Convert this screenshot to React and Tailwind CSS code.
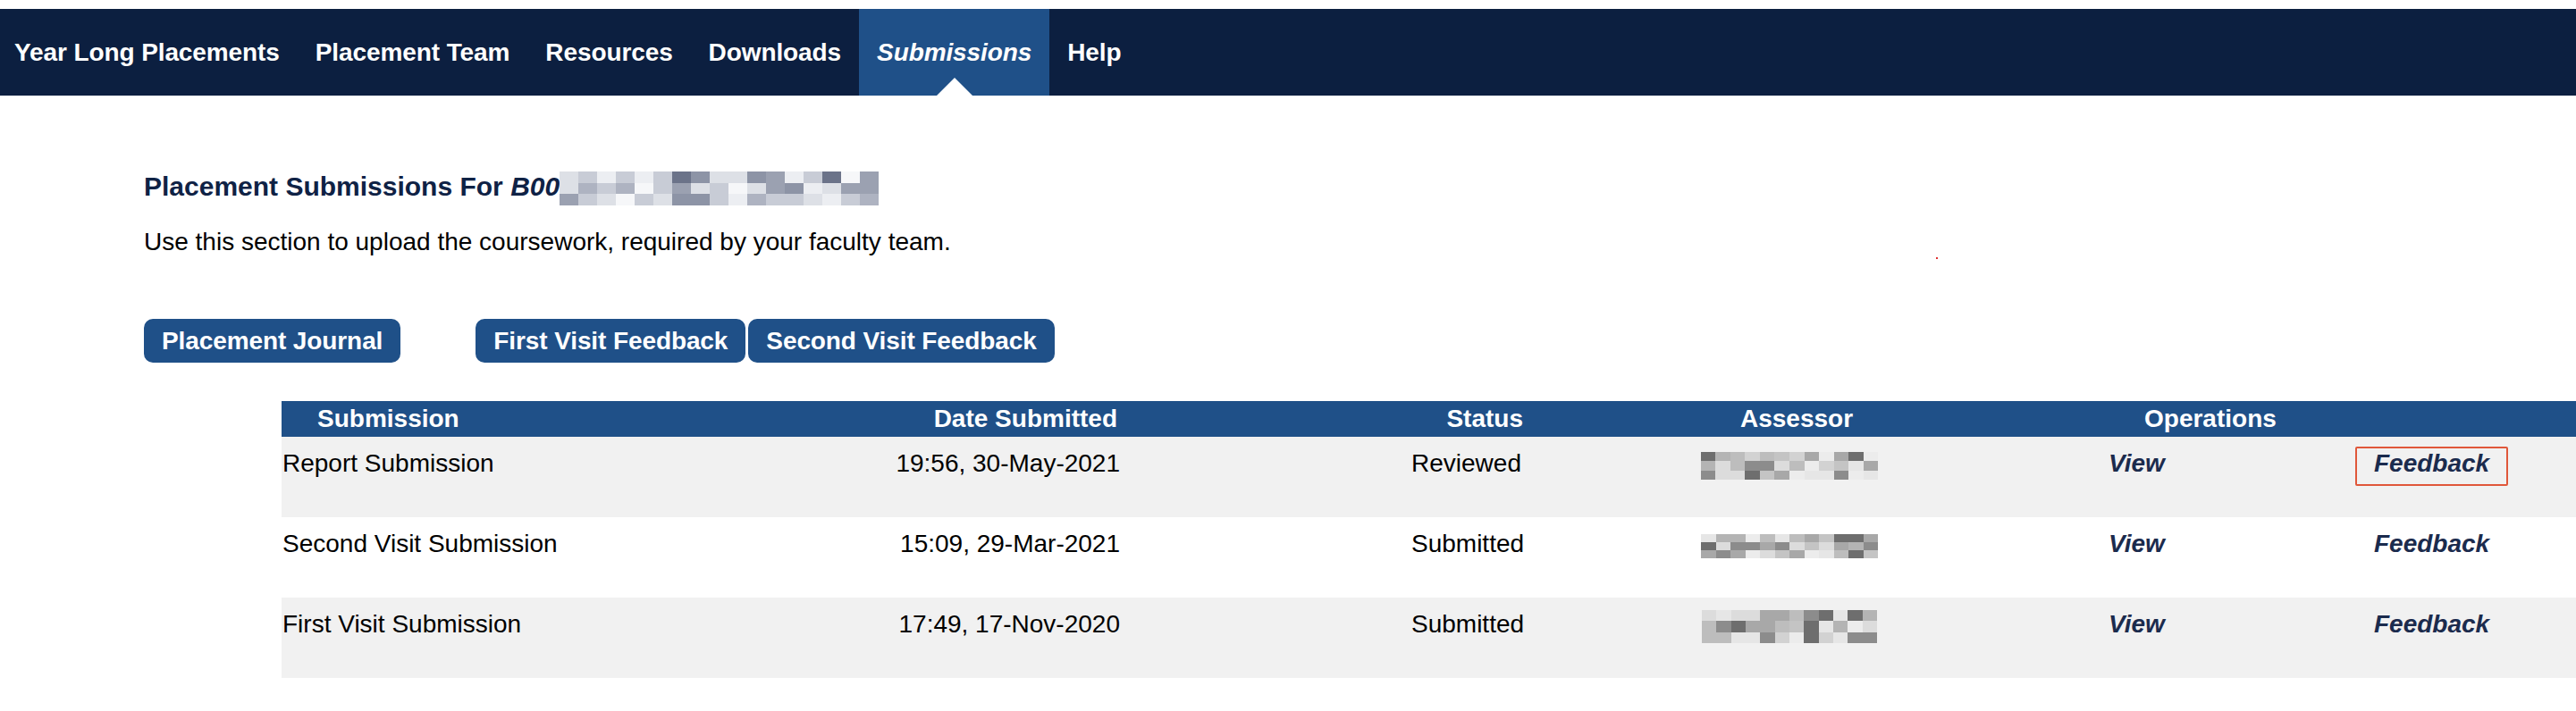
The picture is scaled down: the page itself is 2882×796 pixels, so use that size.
import React from 'react';

const navItems = ['Year Long Placements', 'Placement Team', 'Resources', 'Downloads', 'Submissions', 'Help'];

const headPalette = ['bg-[#6b7389]', 'bg-[#8d94a6]', 'bg-[#aeb3c1]', 'bg-[#c8ccd6]', 'bg-[#dde0e6]', 'bg-[#eceef2]', 'bg-[#f6f7f9]', 'bg-[#9ba1b1]', 'bg-[#c8ccd6]', 'bg-[#dde0e6]'];
const grayPalette = ['bg-[#e6e6e6]', 'bg-[#d2d2d2]', 'bg-[#bdbdbd]', 'bg-[#a8a8a8]', 'bg-[#8c8c8c]', 'bg-[#dcdcdc]', 'bg-[#6e6e6e]', 'bg-[#c4c4c4]', 'bg-[#ececec]', 'bg-[#b4b4b4]'];

const rows = [
  { name: 'Report Submission', date: '19:56, 30-May-2021', status: 'Reviewed', shaded: true, focus: true, blur: 'mt-[17px] w-[199px] h-[31px]', seed: 11 },
  { name: 'Second Visit Submission', date: '15:09, 29-Mar-2021', status: 'Submitted', blur: 'mt-[19px] w-[198px] h-[27px]', seed: 47 },
  { name: 'First Visit Submission', date: '17:49, 17-Nov-2020', status: 'Submitted', shaded: true, blur: 'mt-[14px] w-[196px] h-[37px]', seed: 83 },
];

// fake mosaic for the redacted bits
function Pixelated({ className, cols, lines, palette, seed }) {
  let s = seed;
  const next = () => (s = (s * 9301 + 49297) % 233280) / 233280;
  return (
    <div className={'flex flex-col ' + className}>
      {Array.from({ length: lines }).map((_, r) => (
        <div key={r} className="flex flex-1">
          {Array.from({ length: cols }).map((_, c) => (
            <div key={c} className={'flex-1 ' + palette[Math.floor(next() * palette.length)]} />
          ))}
        </div>
      ))}
    </div>
  );
}

export default function App() {
  return (
    <div className="relative min-h-[796px] whitespace-nowrap bg-white pt-[10px] font-['Liberation_Sans',Arial,Helvetica,sans-serif] text-black">
      <nav className="flex h-[97px] bg-[#0c1f40]">
        <ul className="-ml-[4px] flex h-full">
          {navItems.map(item => {
            const active = item === 'Submissions';
            return (
              <li key={item} className={'relative flex h-full items-center px-[20px] text-[28px] font-bold tracking-[-0.1px] text-white ' + (active ? 'bg-[#1f5088] italic' : '')}>
                {item}
                {active && (
                  <span className="absolute bottom-0 left-1/2 h-0 w-0 -translate-x-1/2 border-x-[20px] border-b-[20px] border-x-transparent border-b-white" />
                )}
              </li>
            );
          })}
        </ul>
      </nav>

      <div className="pl-[161px]">
        <div className="mt-[85px] flex items-start">
          <h2 className="text-[30px] font-bold leading-[34px] text-[#0f2245]">
            Placement Submissions For <span className="italic">B00</span>
          </h2>
          <Pixelated className="h-[38px] w-[357px]" cols={17} lines={3} palette={headPalette} seed={5} />
        </div>
        <p className="mt-[25px] text-[28px] leading-[32px]">Use this section to upload the coursework, required by your faculty team.</p>

        <div className="mt-[70px] flex">
          <button className="h-[49px] rounded-[10px] bg-[#1f5088] px-[20px] text-[28px] font-bold tracking-[-0.1px] text-white">Placement Journal</button>
          <button className="ml-[84px] h-[49px] rounded-[10px] bg-[#1f5088] px-[20px] text-[28px] font-bold tracking-[-0.1px] text-white">First Visit Feedback</button>
          <button className="ml-[3px] h-[49px] rounded-[10px] bg-[#1f5088] px-[20px] text-[28px] font-bold tracking-[-0.1px] text-white">Second Visit Feedback</button>
        </div>
      </div>

      <div className="mt-[43px] pl-[315px]">
        <div className="flex h-[40px] items-center bg-[#1f5088] text-[28px] font-bold text-white">
          <div className="w-[686px] pl-[40px]">Submission</div>
          <div className="w-[252px] pr-[3px] text-right">Date Submitted</div>
          <div className="w-[451px] text-right">Status</div>
          <div className="w-[596px] pl-[16px] text-center">Assessor</div>
          <div className="pl-[99px]">Operations</div>
        </div>

        {rows.map(r => (
          <div key={r.name} className={'flex h-[90px] items-start text-[28px] leading-[32px] ' + (r.shaded ? 'bg-[#f1f1f1]' : 'bg-white')}>
            <div className="w-[686px] pl-[1px] pt-[14px]">{r.name}</div>
            <div className="w-[252px] pt-[14px] text-right">{r.date}</div>
            <div className="w-[451px] pl-[326px] pt-[14px]">{r.status}</div>
            <div className="flex w-[596px] justify-center">
              <Pixelated className={r.blur} cols={12} lines={3} palette={grayPalette} seed={r.seed} />
            </div>
            <div className="w-[335px] pl-[59px] pt-[14px] font-bold italic text-[#1b2b4d]">View</div>
            <div className="pt-[11px]">
              <div className={'rounded-[2px] border-2 px-[19px] pb-[7px] pt-[1px] font-bold italic text-[#1b2b4d] ' + (r.focus ? 'border-[#e0573a]' : 'border-transparent')}>
                Feedback
              </div>
            </div>
          </div>
        ))}
      </div>

      <span className="absolute left-[2166px] top-[288px] h-[2px] w-[2px] bg-[#e03030]" />
    </div>
  );
}
